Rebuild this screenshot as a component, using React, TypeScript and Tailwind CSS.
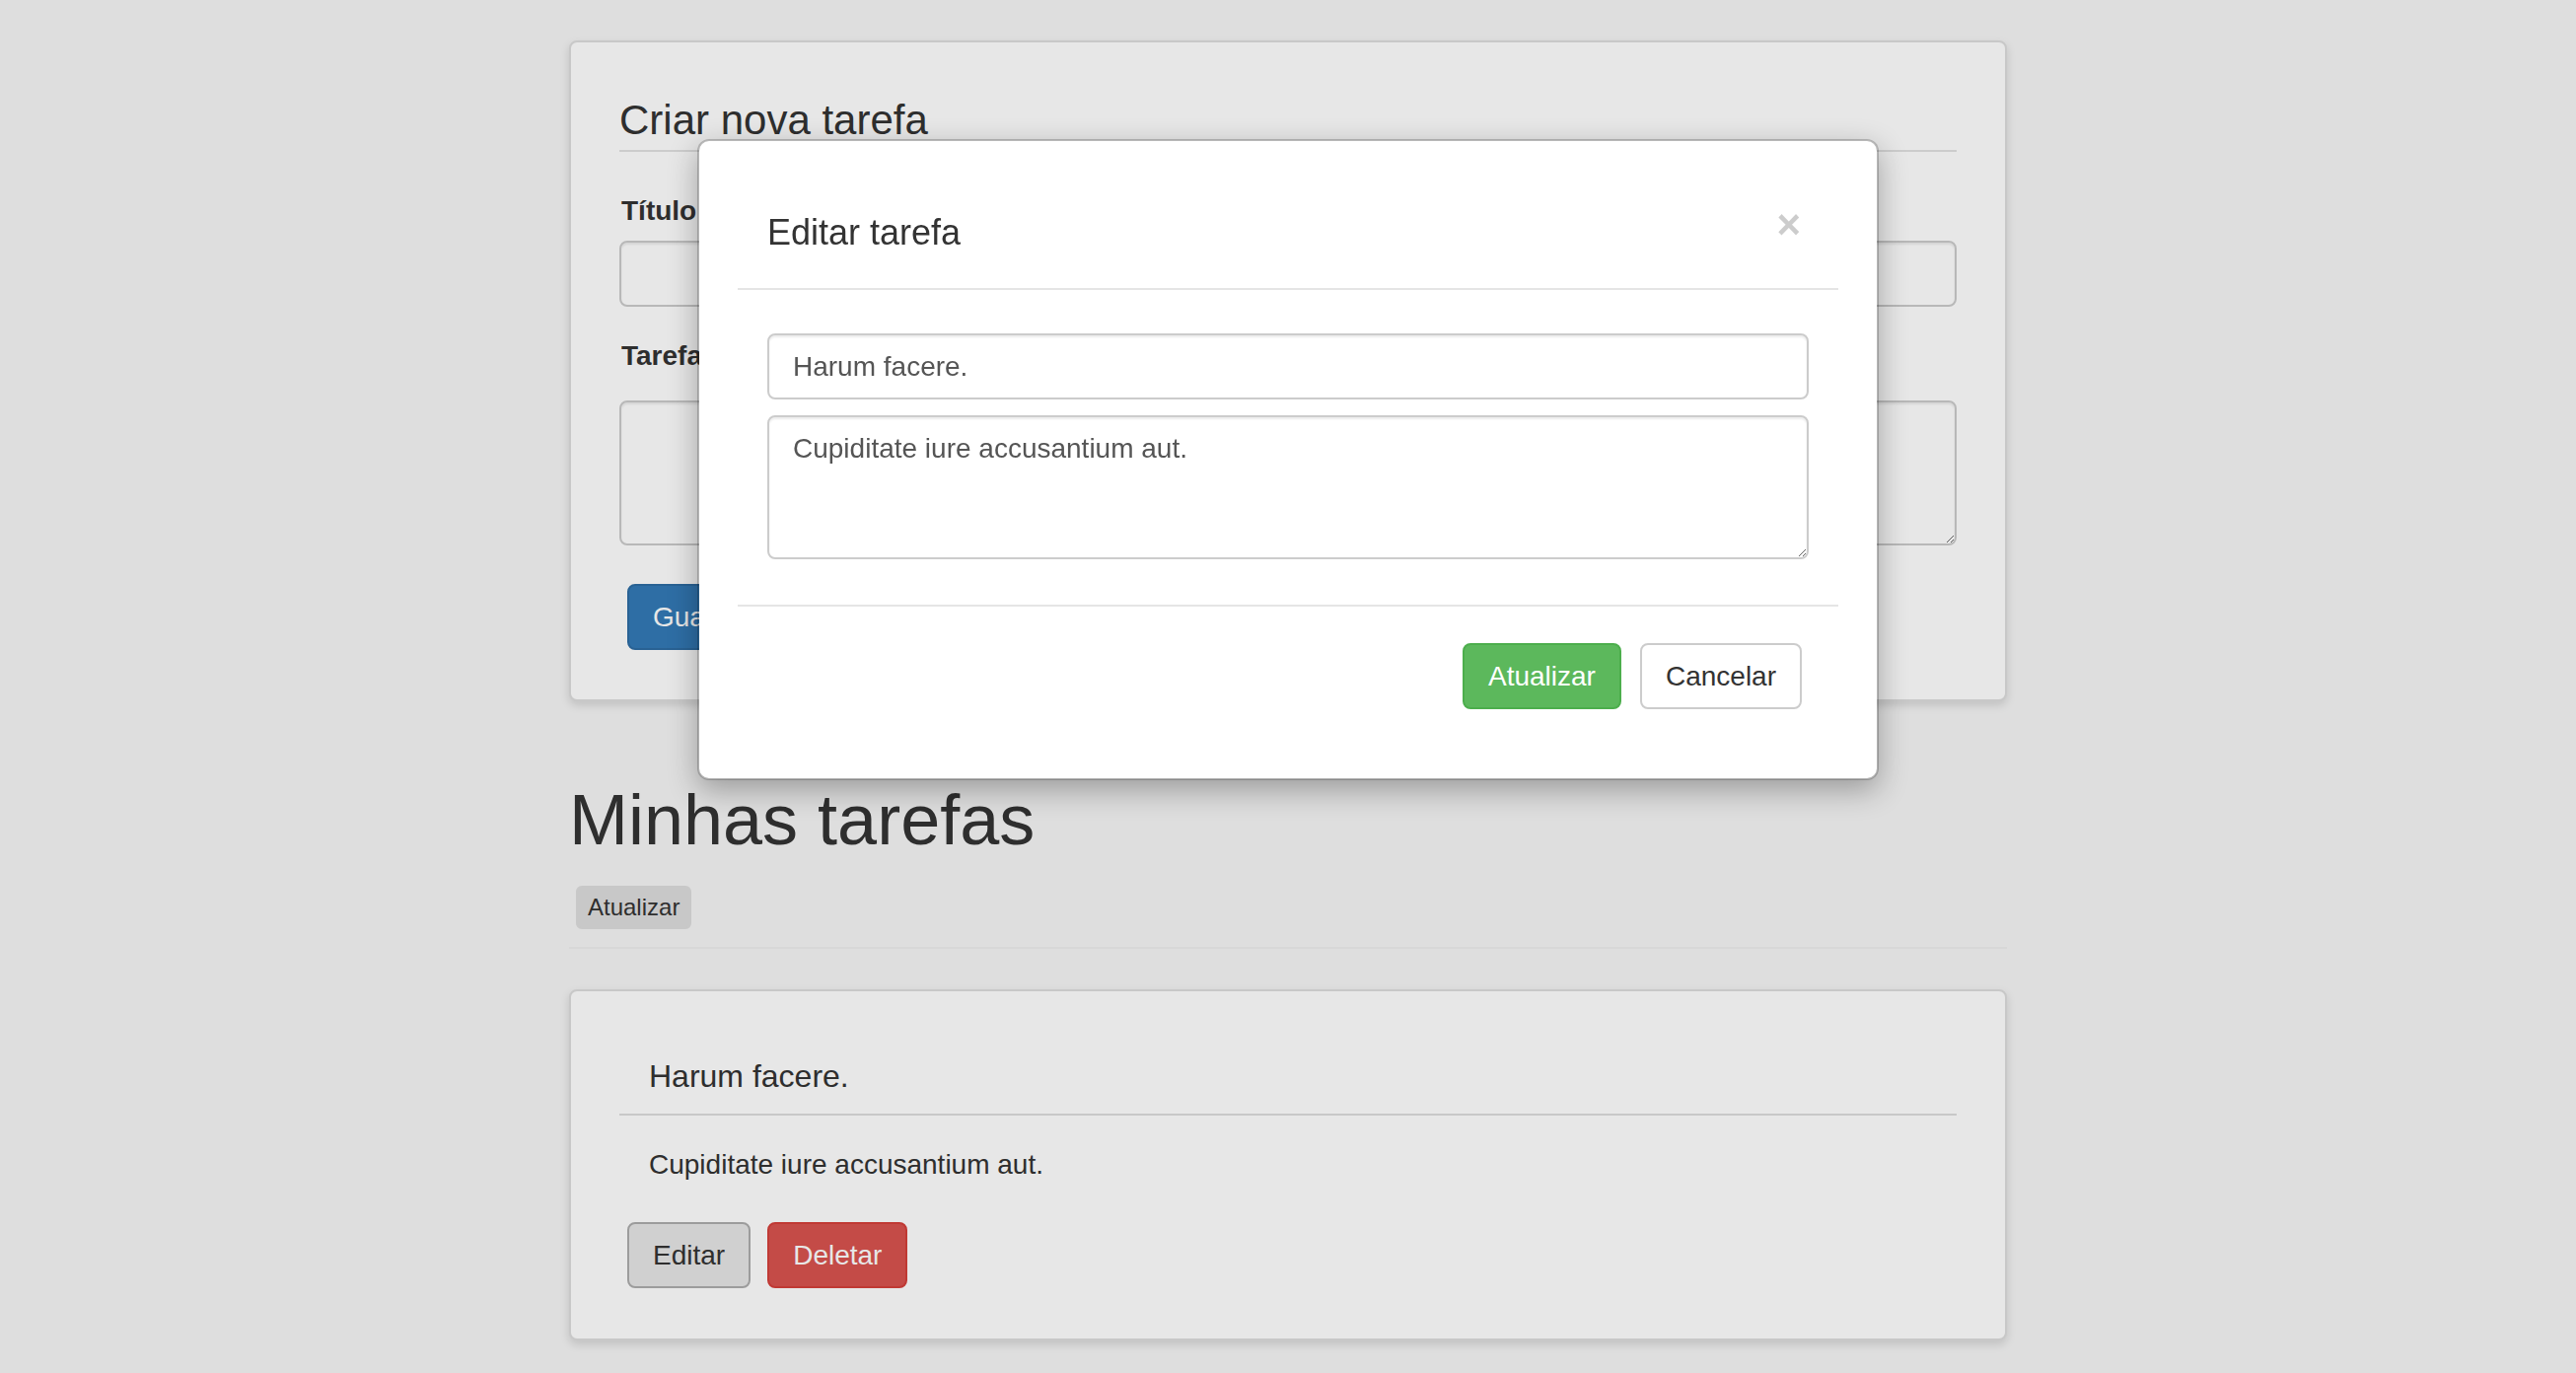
import React from "react";

export default function App() {
  return (
    <div className="relative min-h-screen bg-[#f5f5f5] font-['Liberation_Sans',Arial,sans-serif] text-[28px] leading-[40px] text-[#333]">
      <div className="mx-auto w-[1458px] pt-[41px] pb-[40px]">
        {/* Create panel */}
        <div className="rounded-[8px] border-2 border-[#ddd] bg-white px-[49px] pt-[56px] pb-[50px] shadow-[0_4px_10px_rgba(0,0,0,0.13)]">
          <div className="border-b-2 border-[#e2e2e2] pb-[7px] text-[42px] leading-[46px]">Criar nova tarefa</div>
          <div className="mt-[40px] pl-[2px] font-bold">Título</div>
          <input
            className="mt-[10px] block h-[67px] w-full rounded-[8px] border-2 border-[#ccc] bg-white px-[24px] text-[#555] shadow-[inset_0_2px_2px_rgba(0,0,0,0.075)] outline-none"
            defaultValue=""
          />
          <div className="mt-[30px] pl-[2px] font-bold">Tarefa</div>
          <textarea
            className="mt-[25px] block h-[147px] w-full rounded-[8px] border-2 border-[#ccc] bg-white px-[24px] py-[12px] text-[#555] shadow-[inset_0_2px_2px_rgba(0,0,0,0.075)] outline-none"
            defaultValue=""
          />
          <div className="mt-[39px] flex">
            <button className="ml-[8px] h-[67px] rounded-[8px] border-2 border-[#2e6da4] bg-[#337ab7] px-[24px] text-white">
              Guardar
            </button>
          </div>
        </div>

        <h1 className="mt-[81px] text-[72px] leading-[79px] font-normal">Minhas tarefas</h1>
        <div className="mt-[27px] flex">
          <button className="ml-[7px] h-[44px] rounded-[6px] border-2 border-[#ddd] bg-[#ddd] px-[10px] text-[24px] leading-[36px] text-[#333]">
            Atualizar
          </button>
        </div>
        <div className="mt-[18px] border-t-2 border-[#eee]" />

        {/* Task panel */}
        <div className="mt-[41px] rounded-[8px] border-2 border-[#ddd] bg-white px-[49px] pt-[68px] pb-[51px] shadow-[0_4px_10px_rgba(0,0,0,0.13)]">
          <div className="border-b-2 border-[#ddd] pb-[20px] pl-[30px] text-[32px] leading-[36px]">Harum facere.</div>
          <div className="mt-[30px] pl-[30px]">Cupiditate iure accusantium aut.</div>
          <div className="mt-[38px] flex">
            <button className="ml-[8px] h-[67px] rounded-[8px] border-2 border-[#adadad] bg-[#e6e6e6] px-[24px] text-[#333]">
              Editar
            </button>
            <button className="ml-[17px] h-[67px] rounded-[8px] border-2 border-[#d43f3a] bg-[#d9534f] px-[24px] text-white">
              Deletar
            </button>
          </div>
        </div>
      </div>

      {/* Backdrop */}
      <div className="fixed inset-0 bg-[rgba(0,0,0,0.094)]" />

      {/* Modal */}
      <div className="fixed inset-0">
        <div className="mx-auto mt-[141px] w-[1198px] rounded-[12px] border-2 border-[rgba(0,0,0,0.2)] bg-white bg-clip-padding shadow-[0_10px_30px_rgba(0,0,0,0.3)]">
          <div className="px-[39px] pt-[37px] pb-[40px]">
            <div className="flex items-start justify-between border-b-2 border-[#e5e5e5] px-[30px] pt-[30px] pb-[31px]">
              <div className="text-[36px] leading-[51px]">Editar tarefa</div>
              <button className="mr-[8px] -mt-[3px] text-[42px] font-bold leading-[42px] text-black/20 [text-shadow:0_1px_0_#fff]">
                ×
              </button>
            </div>
            <div className="px-[30px] pt-[44px] pb-[46px]">
              <input
                className="block h-[67px] w-full rounded-[8px] border-2 border-[#ccc] bg-white px-[24px] text-[#555] shadow-[inset_0_2px_2px_rgba(0,0,0,0.075)] outline-none"
                defaultValue="Harum facere."
              />
              <textarea
                className="mt-[16px] block h-[146px] w-full rounded-[8px] border-2 border-[#ccc] bg-white px-[24px] py-[12px] text-[#555] shadow-[inset_0_2px_2px_rgba(0,0,0,0.075)] outline-none"
                defaultValue="Cupiditate iure accusantium aut."
              />
            </div>
            <div className="flex justify-end gap-[19px] border-t-2 border-[#e5e5e5] pt-[37px] pr-[37px] pb-[30px]">
              <button className="h-[67px] rounded-[8px] border-2 border-[#4cae4c] bg-[#5cb85c] px-[24px] text-white">
                Atualizar
              </button>
              <button className="h-[67px] rounded-[8px] border-2 border-[#ccc] bg-white px-[24px] text-[#333]">
                Cancelar
              </button>
            </div>
          </div>
        </div>
      </div>
    </div>
  );
}
